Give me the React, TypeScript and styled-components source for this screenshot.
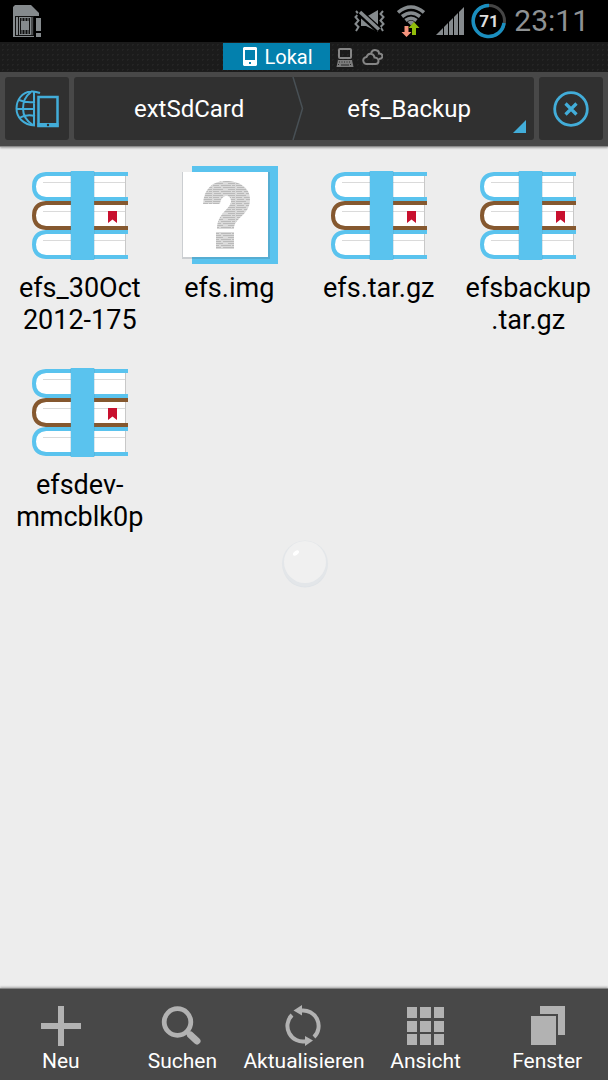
import React from "react";
import styled, { createGlobalStyle } from "styled-components";

const GlobalStyle = createGlobalStyle`
  * { box-sizing: border-box; }
  body { margin: 0; background: #ededed; }
  button { border: 0; padding: 0; margin: 0; background: none; color: inherit; font: inherit; cursor: pointer; }
  svg { display: block; flex: none; }
`;

const Screen = styled.div`
  display: flex;
  flex-direction: column;
  min-height: 100vh;
  font-family: Roboto, "Liberation Sans", sans-serif;
  color: #fff;
`;

const StatusBar = styled.header`
  display: flex;
  align-items: center;
  justify-content: space-between;
  height: 42px;
  padding: 0 19px 0 12px;
  background: #000;
`;

const StatusGroup = styled.div`
  display: flex;
  align-items: center;
  gap: 7px;
`;

const StatusIcons = styled.div`
  display: flex;
  align-items: center;
  gap: 11px;
`;

const Clock = styled.time`
  font-size: 30px;
  line-height: 42px;
  color: #8f9294;
`;

const TabStrip = styled.nav`
  display: flex;
  justify-content: center;
  height: 30px;
  padding: 1px 0 1px;
  background-color: #1b1b1b;
  background-image: radial-gradient(#242424 1px, transparent 1px);
  background-size: 5px 5px;
  border-bottom: 1px solid #141414;
`;

const Tab = styled.button<{ $active?: boolean }>`
  display: flex;
  align-items: center;
  justify-content: center;
  gap: 7px;
  width: ${(p) => (p.$active ? "107px" : "27px")};
  padding-left: ${(p) => (p.$active ? "4px" : "0")};
  background: ${(p) => (p.$active ? "#0380ad" : "transparent")};
  font-size: 20px;
  line-height: 28px;
`;

const TabGroup = styled.div`
  display: flex;
  padding-left: 2px;
`;

const PathBar = styled.div`
  display: flex;
  gap: 5px;
  height: 75px;
  padding: 5px 5px 6px;
  background: #484848;
  border-bottom: 1px solid #8b8b8b;
  box-shadow: 0 1px 2px #a0a0a0;
  z-index: 1;
`;

const SquareButton = styled.button`
  display: flex;
  align-items: center;
  justify-content: center;
  flex: none;
  width: 64px;
  border-radius: 3px;
  background: #303030;
`;

const Crumbs = styled.div`
  display: grid;
  grid-template-columns: 19fr 12px 20fr;
  flex: 1;
  position: relative;
  border-radius: 3px;
  background: #303030;
`;

const Crumb = styled.button<{ $last?: boolean }>`
  padding: ${(p) => (p.$last ? "0 20px 0 0" : "0 0 0 12px")};
  font-size: 24px;
  line-height: 32px;
`;

const CornerMark = styled.svg`
  position: absolute;
  right: 8px;
  bottom: 7px;
`;

const Files = styled.main`
  display: grid;
  grid-template-columns: repeat(4, 1fr);
  grid-auto-rows: 197px;
  align-content: start;
  flex: 1;
  position: relative;
  padding: 19px 5px;
  background: #ededed;
  color: #000;
`;

const File = styled.button`
  display: flex;
  flex-direction: column;
  align-items: center;
  justify-content: flex-start;
`;

const FileName = styled.span`
  margin-top: 6px;
  font-size: 27px;
  line-height: 32px;
  text-align: center;
  white-space: pre-line;
`;

const TouchDot = styled.svg`
  position: absolute;
  left: calc(50% - 23px);
  top: 392px;
`;

const BottomBar = styled.footer`
  display: grid;
  grid-template-columns: repeat(5, 1fr);
  height: 92px;
  background: #484848;
  border-top: 1px solid #858585;
  box-shadow: 0 -1px 2px #aaa;
  z-index: 1;
`;

const Action = styled.button`
  display: flex;
  flex-direction: column;
  align-items: center;
  padding-top: 16px;
  font-size: 21px;
  line-height: 24px;
`;

const ActionLabel = styled.span`
  margin-top: 2px;
`;

const SimIcon = () => (
  <svg width="30" height="34" viewBox="0 0 30 34">
    <path d="M1 3l2-2h16l8 8v24H1z" fill="#858a8d" />
    <path d="M3 12h19v20H3z" fill="#111" />
    <path d="M4 13h2v18H4zM7 13h12v18H7z" fill="#858a8d" />
    <path d="M20 13v18" stroke="#858a8d" />
    <path d="M8 14h10v16H8z" fill="#111" />
    <path d="M9 17h8v9H9z" fill="#858a8d" />
    <path d="M10 13v5M13 13v5M16 13v5M10 25v6M13 25v6M16 25v6" stroke="#858a8d" />
    <path d="M22 12h8v22h-8z" fill="#000" />
    <path d="M24 14h5v13h-5zM24 29h5v4h-5z" fill="#858a8d" />
  </svg>
);

const VibrateOffIcon = () => (
  <svg width="32" height="24" viewBox="0 0 32 24" fill="none" stroke="#858a8d" strokeWidth="2">
    <path d="M2 2l2.500 3L1.500 8l3 3.500-3 3.500 3 3L2 22M29 2l-2.500 3 3 3-3 3.500 3 3.500-3 3 2.500 4" />
    <path d="M7 8h5l12-7v22l-12-6H7z" fill="#858a8d" stroke="none" />
    <path d="M5 3l20 18" stroke="#000" strokeWidth="7" />
    <path d="M6 3l19 17.500" strokeWidth="3.500" />
  </svg>
);

const WifiIcon = () => (
  <svg width="28" height="32" viewBox="0 0 28 32">
    <g fill="none" stroke="#858a8d" strokeWidth="3.600">
      <path d="M1 7.500Q14-3.500 27 7.500M5 11.500q9-7 18 0M8.500 15.500q5.500-4.500 11 0" />
    </g>
    <path d="M10.500 17q3.500-3 7 0L14 20.500z" fill="#858a8d" />
    <path d="M7.500 21h4v6h3l-5 5-5-5h3z" fill="#f5937c" />
    <path d="M15 30v-7h-3.500l5.500-6 5.500 6H19v7z" fill="#91bd0b" />
  </svg>
);

const SignalIcon = () => (
  <svg width="28" height="28" viewBox="0 0 28 28">
    <path d="M0 28L28 0v28z" fill="#858a8d" />
    <path d="M7.500 0v28M12.500 0v28M17.500 0v28M22.500 0v28" stroke="#000" strokeWidth="1" />
  </svg>
);

const BatteryRing = () => (
  <svg width="36" height="36" viewBox="0 0 36 36">
    <circle cx="18" cy="18" r="15.500" fill="none" stroke="#454545" strokeWidth="3" />
    <path d="M18 2.500A15.500 15.500 0 1 0 33 20" fill="none" stroke="#1a8fc0" strokeWidth="3.500" />
    <text x="18" y="24" textAnchor="middle" fontSize="17" fontWeight="700" fill="#dedede" fontFamily="Roboto, sans-serif">71</text>
  </svg>
);

const PhoneIcon = () => (
  <svg width="14" height="19" viewBox="0 0 14 19">
    <path fillRule="evenodd" d="M1 0h12l1 1v17l-1 1H1l-1-1V1zM2 3v10h10V3zM6 15v2h2v-2z" fill="#fff" />
  </svg>
);

const ComputerIcon = () => (
  <svg width="18" height="20" viewBox="0 0 18 20">
    <rect x="3" y="2" width="12" height="9" rx="1" fill="none" stroke="#858585" strokeWidth="2" />
    <path d="M2 13h14l1.500 7H0.500z" fill="#7c7c7c" />
    <path d="M3 15h12M2 17.500h2M14 17.500h2" stroke="#2a2a2a" strokeDasharray="1 1.500" />
    <path d="M5 18h8" stroke="#2a2a2a" />
  </svg>
);

const CloudIcon = () => (
  <svg width="21" height="16" viewBox="0 0 21 16" fill="none" stroke="#858585" strokeWidth="2">
    <path d="M5 15a3.500 3.500 0 0 1-.5-7Q6 4 9.500 5q2.500.5 3 3.500 4 .5 4 3.500 0 3-3 3z" />
    <path d="M9 4q2-4 6-2.500Q17 2 17 4.500q3.500 0 3.500 3Q20 10 17 10" />
  </svg>
);

const GlobeIcon = () => (
  <svg width="44" height="38" viewBox="0 0 44 38" fill="none" stroke="#42add9" strokeWidth="2">
    <path d="M25 3Q20 1 16 1.500C7 2 1.500 10 1.500 18.500S8 35 20 35.500" />
    <path d="M19 2v33M16 2Q8 8 8 18.500T18 35M4 10q7 3 16 2M1 19h19M4 28q7-4 16-2" />
    <rect x="23.500" y="7" width="19" height="29" strokeWidth="2.500" />
    <path d="M22.500 33h21v4h-21z" fill="#42add9" stroke="none" />
    <circle cx="33" cy="35" r="1.200" fill="#303030" stroke="none" />
  </svg>
);

const CloseIcon = () => (
  <svg width="36" height="36" viewBox="0 0 36 36" fill="none" stroke="#42add9">
    <circle cx="18" cy="18" r="16.300" strokeWidth="2.800" />
    <path d="M12.500 12.500l11 11M23.500 12.500l-11 11" strokeWidth="3.200" />
  </svg>
);

const Divider = () => (
  <svg width="12" height="63" viewBox="0 0 12 63" fill="none" stroke="#485055" strokeWidth="1.500">
    <path d="M1 0l9.500 31.500L1 63" />
  </svg>
);

const Book = ({ y, color }: { y: number; color: string }) => (
  <g>
    <path d={`M98 ${y + 2}H16Q4 ${y + 3} 4 ${y + 14.5}T16 ${y + 27}H98`} fill="#fff" stroke={color} strokeWidth="4" />
    <path d={`M13 ${y + 10.5}H95`} stroke="#dadada" />
    <path d={`M95.500 ${y + 4}v21`} stroke="#c8c8c8" />
    <path d={`M97 ${y + 4}v21`} stroke="#ededed" strokeWidth="2" />
  </g>
);

const ArchiveIcon = () => (
  <svg width="100" height="100" viewBox="0 0 100 100">
    <Book y={6} color="#5ac3ee" />
    <Book y={64} color="#5ac3ee" />
    <Book y={35} color="#85582f" />
    <path d="M40.500 5h24v89h-24z" fill="#4a8fae" opacity="0.400" />
    <path d="M41 5h23v89H41z" fill="#5ac3ee" />
    <path d="M78 45h9v12l-4.500-3.500L78 57z" fill="#c8102e" />
  </svg>
);

const UnknownIcon = () => (
  <svg width="100" height="100" viewBox="-1 0 100 100">
    <defs>
      <pattern id="lines" width="23" height="6" patternUnits="userSpaceOnUse">
        <path d="M0 0h23v6H0z" fill="#dadada" />
        <path d="M0 1.500h5M6 1.500h3M10 1.500h6M18 1.500h5M0 3.500h9M11 3.500h7M20 3.500h3M2 5.500h7M10 5.500h10" stroke="#bababa" />
      </pattern>
    </defs>
    <path d="M12 0h86v98H12z" fill="#5ac3ee" />
    <path d="M2 6h88v87H2z" fill="#456" opacity="0.200" />
    <path d="M3 6h85v85H3z" fill="#fff" />
    <path d="M23 38C24 23 32 15 46 15C60 15 70 22 70 33C70 50 54 51 54 63H37C37 47 51 43 51 35C51 28 41 28 40 38z" fill="url(#lines)" />
    <path d="M36 66h18v17H36z" fill="url(#lines)" />
  </svg>
);

const TouchSpot = () => (
  <TouchDot width="48" height="50" viewBox="0 0 48 50">
    <circle cx="24" cy="26" r="22.500" fill="#dfe3e7" />
    <circle cx="24" cy="24.500" r="23" fill="#e3e6e9" />
    <circle cx="24" cy="23" r="21" fill="#f0f0f0" />
    <ellipse cx="15" cy="14" rx="3.500" ry="2" fill="#fff" transform="rotate(-40 15 14)" />
  </TouchDot>
);

const PlusIcon = () => (
  <svg width="42" height="42" viewBox="0 0 42 42"><path d="M18 1h6v17h17v6H24v17h-6V24H1v-6h17z" fill="#b2b2b2" /></svg>
);

const SearchIcon = () => (
  <svg width="42" height="42" viewBox="0 0 42 42" fill="none" stroke="#b2b2b2">
    <circle cx="16.500" cy="17" r="13.300" strokeWidth="4.800" />
    <path d="M25 26l4 4" strokeWidth="4" />
    <path d="M29.500 30l6.500 6" strokeWidth="7" strokeLinecap="round" />
  </svg>
);

const RefreshIcon = () => (
  <svg width="42" height="42" viewBox="0 0 42 42">
    <g fill="none" stroke="#b2b2b2" strokeWidth="4">
      <path d="M9 10A15.500 15.500 0 0 0 23 36.200" />
      <path d="M18 5.600A15.500 15.500 0 0 1 31 32" />
    </g>
    <path d="M10.500 5.500L19 0v10.500zM30 35.500L22 41V31z" fill="#b2b2b2" />
  </svg>
);

const GridIcon = () => (
  <svg width="42" height="42" viewBox="0 0 42 42">
    <path d="M2 2h10v11H2zM15 2h11v11H15zM29 2h10v11H29zM2 16h10v11H2zM15 16h11v11H15zM29 16h10v11H29zM2 29h10v11H2zM15 29h11v11H15zM29 29h10v11H29z" fill="#b2b2b2" />
  </svg>
);

const WindowsIcon = () => (
  <svg width="42" height="42" viewBox="0 0 42 42">
    <path d="M14 1h25v29h-7V9H14zM5 11h25v29H5z" fill="#b2b2b2" />
  </svg>
);

const files = [
  { name: "efs_30Oct\n2012-175", archive: true },
  { name: "efs.img", archive: false },
  { name: "efs.tar.gz", archive: true },
  { name: "efsbackup\n.tar.gz", archive: true },
  { name: "efsdev-\nmmcblk0p", archive: true },
];

const actions = [
  { label: "Neu", Icon: PlusIcon },
  { label: "Suchen", Icon: SearchIcon },
  { label: "Aktualisieren", Icon: RefreshIcon },
  { label: "Ansicht", Icon: GridIcon },
  { label: "Fenster", Icon: WindowsIcon },
];

export default function App() {
  return (
    <Screen>
      <GlobalStyle />
      <StatusBar>
        <SimIcon />
        <StatusGroup>
          <StatusIcons>
            <VibrateOffIcon />
            <WifiIcon />
            <SignalIcon />
          </StatusIcons>
          <BatteryRing />
          <Clock>23:11</Clock>
        </StatusGroup>
      </StatusBar>
      <TabStrip>
        <Tab $active><PhoneIcon />Lokal</Tab>
        <TabGroup>
          <Tab aria-label="Computer"><ComputerIcon /></Tab>
          <Tab aria-label="Cloud"><CloudIcon /></Tab>
        </TabGroup>
      </TabStrip>
      <PathBar>
        <SquareButton aria-label="Speicherorte"><GlobeIcon /></SquareButton>
        <Crumbs>
          <Crumb>extSdCard</Crumb>
          <Divider />
          <Crumb $last>efs_Backup</Crumb>
          <CornerMark width="13" height="13" viewBox="0 0 13 13"><path d="M13 0v13H0z" fill="#42add9" /></CornerMark>
        </Crumbs>
        <SquareButton aria-label="Schließen"><CloseIcon /></SquareButton>
      </PathBar>
      <Files>
        {files.map((f) => (
          <File key={f.name}>
            {f.archive ? <ArchiveIcon /> : <UnknownIcon />}
            <FileName>{f.name}</FileName>
          </File>
        ))}
        <TouchSpot />
      </Files>
      <BottomBar>
        {actions.map(({ label, Icon }) => (
          <Action key={label}>
            <Icon />
            <ActionLabel>{label}</ActionLabel>
          </Action>
        ))}
      </BottomBar>
    </Screen>
  );
}
